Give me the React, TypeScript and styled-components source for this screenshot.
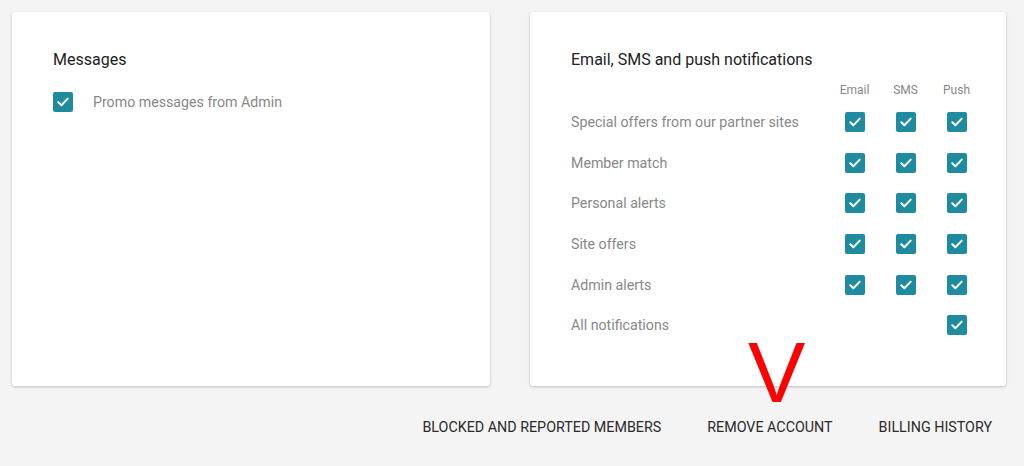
import styled, { createGlobalStyle } from "styled-components";

const GlobalStyle = createGlobalStyle`
  html, body {
    margin: 0;
    padding: 0;
    background: #f4f4f4;
    font-family: Roboto, "Liberation Sans", Arial, sans-serif;
  }
`;

const Page = styled.div`
  position: relative;
  width: 1024px;
  height: 466px;
  padding: 12px 18px 0 12px;
  box-sizing: border-box;
`;

const Cards = styled.div`
  display: grid;
  grid-template-columns: 478px 476px;
  column-gap: 40px;
`;

const Card = styled.div`
  background: #fff;
  height: 374px;
  border-radius: 3px;
  box-shadow: 0 1px 3px rgba(0, 0, 0, 0.22);
  padding: 38px 24px 0 41px;
  box-sizing: border-box;
`;

const Title = styled.h2`
  margin: 0;
  font-size: 16px;
  font-weight: 400;
  line-height: 19px;
  color: #222;
`;

const Row = styled.div`
  display: flex;
  align-items: center;
  gap: 20px;
  margin-top: 23px;
`;

const Label = styled.span`
  font-size: 14.2px;
  color: #888;
`;

const Box = styled.span`
  display: inline-flex;
  align-items: center;
  justify-content: center;
  width: 20px;
  height: 20px;
  border-radius: 2px;
  background: #1e8c9e;
  flex: none;
`;

const Grid = styled.div`
  display: grid;
  grid-template-columns: 1fr 51px 51px 51px;
  margin-top: 11px;
`;

const Head = styled.div`
  height: 22px;
  padding-top: 3px;
  box-sizing: border-box;
  display: flex;
  align-items: flex-start;
  justify-content: center;
  font-size: 12px;
  line-height: 14px;
  color: #888;
`;

const Cell = styled.div<{ $left?: boolean }>`
  height: 40.6px;
  display: flex;
  align-items: center;
  justify-content: ${(p) => (p.$left ? "flex-start" : "center")};
`;

const Footer = styled.div`
  display: flex;
  justify-content: flex-end;
  gap: 46px;
  padding-top: 32px;
  padding-right: 14px;
`;

const Link = styled.a`
  font-size: 14.3px;
  font-weight: 400;
  color: #2a2a2a;
  text-decoration: none;
  text-transform: uppercase;
  line-height: 18px;
  cursor: pointer;
`;

const Mark = styled.span`
  position: absolute;
  left: 748px;
  top: 329px;
  font-family: "Liberation Sans", Arial, sans-serif;
  font-size: 86px;
  line-height: 1;
  color: #ff0000;
`;

function Check() {
  return (
    <Box>
      <svg width="12" height="10" viewBox="0 0 12 10">
        <path
          d="M1.3 5.2 L4.4 8.2 L10.7 1.6"
          fill="none"
          stroke="#fff"
          strokeWidth="2"
          strokeLinecap="round"
          strokeLinejoin="round"
        />
      </svg>
    </Box>
  );
}

const rows: [string, boolean, boolean, boolean][] = [
  ["Special offers from our partner sites", true, true, true],
  ["Member match", true, true, true],
  ["Personal alerts", true, true, true],
  ["Site offers", true, true, true],
  ["Admin alerts", true, true, true],
  ["All notifications", false, false, true],
];

export default function App() {
  return (
    <Page>
      <GlobalStyle />
      <Cards>
        <Card>
          <Title>Messages</Title>
          <Row>
            <Check />
            <Label>Promo messages from Admin</Label>
          </Row>
        </Card>
        <Card>
          <Title>Email, SMS and push notifications</Title>
          <Grid>
            <Head />
            <Head>Email</Head>
            <Head>SMS</Head>
            <Head>Push</Head>
            {rows.map(([name, e, s, p]) => (
              <>
                <Cell $left key={name}>
                  <Label>{name}</Label>
                </Cell>
                <Cell>{e && <Check />}</Cell>
                <Cell>{s && <Check />}</Cell>
                <Cell>{p && <Check />}</Cell>
              </>
            ))}
          </Grid>
        </Card>
      </Cards>
      <Footer>
        <Link>Blocked and reported members</Link>
        <Link>Remove account</Link>
        <Link>Billing history</Link>
      </Footer>
      <Mark>V</Mark>
    </Page>
  );
}
